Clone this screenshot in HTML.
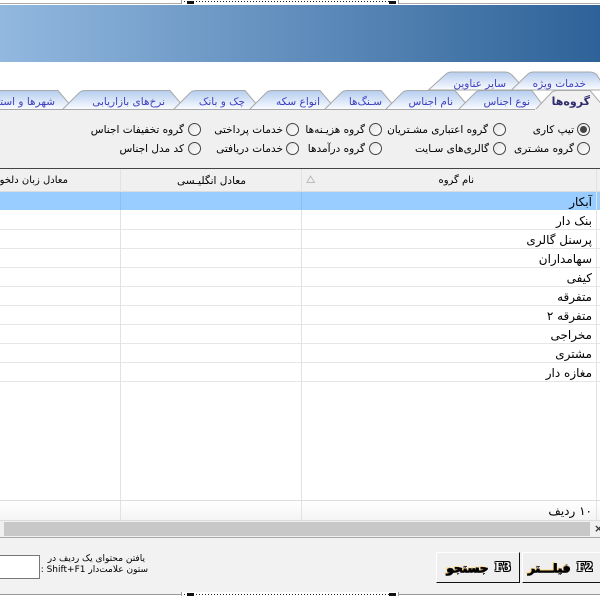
<!DOCTYPE html>
<html><head><meta charset="utf-8">
<style>
html,body{margin:0;padding:0;background:#fff}
#p{position:relative;width:600px;height:596px;overflow:hidden;background:#fff;font-family:"DejaVu Sans","Liberation Sans",sans-serif;font-size:10.5px;color:#000}
#p div{position:absolute}
.t{white-space:nowrap;direction:rtl;line-height:14px;text-align:right}
.tab{color:#3f3fc0}
.line{background:#e6e6e6;left:0;width:600px;height:1px}
.row{font-size:12px;right:8px}
.r{width:11px;height:11px;border:1px solid #444;border-radius:50%;background:linear-gradient(135deg,#e4e4e4,#fff)}
.btn{background:#efefef;border-top:1px solid #fff;border-left:1px solid #fff;border-right:1px solid #111;border-bottom:1px solid #111;box-sizing:border-box}
.bt{font-weight:bold;white-space:nowrap;line-height:14px}
.bf{font-family:"Liberation Serif",serif;font-size:14px;color:#fff;text-shadow:1px 0 0 #000,-1px 0 0 #000,0 1px 0 #000,0 -1px 0 #000,1px 1px 0 #000,-1px -1px 0 #000,1px -1px 0 #000,-1px 1px 0 #000}
.ba{font-size:12px;direction:rtl;color:#000;text-shadow:1px 0 0 #000,0 1px 0 #333,-1px -1px 0 #ffd27a}
</style></head>
<body><div id="p">
<div style="left:0;top:3px;width:181px;height:1px;background:#aaa"></div>
<div style="left:399px;top:3px;width:201px;height:1px;background:#aaa"></div>
<div style="left:181px;top:0;width:218px;height:4px;background:#fff;border-left:1px solid #999;border-right:1px solid #999;box-sizing:border-box"></div>
<div style="left:184px;top:1px;width:212px;height:1px;background:repeating-linear-gradient(90deg,#222 0 1px,#fff 1px 3px)"></div>
<div style="left:187px;top:1px;width:7px;height:3px;background:#111"></div>
<div style="left:389px;top:1px;width:7px;height:3px;background:#111"></div>
<div style="left:0;top:5px;width:600px;height:57px;background:linear-gradient(90deg,#92b8df,#2e6298)"></div>

<svg style="position:absolute;left:0;top:70px" width="600" height="41" viewBox="0 70 600 41">
<defs><linearGradient id="g" x1="0" y1="0" x2="0" y2="1"><stop offset="0" stop-color="#b4cdee"/><stop offset="1" stop-color="#fbfcff"/></linearGradient></defs>
<g fill="url(#g)" stroke="#a8a8a8" stroke-width="1">
<path d="M428.500 90L446 74Q448 72 452 72L505 72Q509 72 512 75L521 85L521 90Z"/>
<path d="M511.500 90L528 74Q530 72 534 72L590 72Q594 72 597 75L606 90Z"/>
<path d="M-40 109.500L-20 90.500L58 90.500L74 109.500Z"/>
<path d="M62.500 109.500L80 92Q82 90.500 86 90.500L170 90.500L186 109.500Z"/>
<path d="M173.500 109.500L191 92Q193 90.500 197 90.500L245 90.500L261 109.500Z"/>
<path d="M249.500 109.500L267 92Q269 90.500 273 90.500L320 90.500L336 109.500Z"/>
<path d="M324.500 109.500L342 92Q344 90.500 348 90.500L381 90.500L397 109.500Z"/>
<path d="M385.500 109.500L403 92Q405 90.500 409 90.500L455 90.500L471 109.500Z"/>
<path d="M458.500 109.500L476 92Q478 90.500 482 90.500L532 90.500L546 109.500Z"/>
</g>
<path d="M535.500 109.500L552 92Q554 90.500 558 90.500L590 90.500L606 109.500Z" fill="#f0f0f0" stroke="#a8a8a8"/>
</svg>
<div style="left:0;top:109px;width:600px;height:59px;background:#f0f0f0"></div>
<div style="left:0;top:109px;width:535px;height:1px;background:#a8a8a8"></div>

<div class="t tab" style="right:14px;top:77px">خدمات ویژه</div>
<div class="t tab" style="right:94px;top:77px">سایر عناوین</div>
<div class="t" style="right:10px;top:95px;font-weight:bold;color:#2d2d6b;font-size:11px">گروه‌ها</div>
<div class="t tab" style="right:70px;top:95px">نوع اجناس</div>
<div class="t tab" style="right:147px;top:95px">نام اجناس</div>
<div class="t tab" style="right:218px;top:95px">سـنگ‌ها</div>
<div class="t tab" style="right:280px;top:95px">انواع سکه</div>
<div class="t tab" style="right:355px;top:95px">چک و بانک</div>
<div class="t tab" style="right:435px;top:95px">نرخ‌های بازاریابی</div>
<div class="t tab" style="right:545px;top:95px">شهرها و استان‌ها</div>

<div class="r" style="left:577px;top:123px"></div><div style="left:580px;top:126px;width:7px;height:7px;border-radius:50%;background:#444"></div>
<div class="r" style="left:493px;top:123px"></div>
<div class="r" style="left:369px;top:123px"></div>
<div class="r" style="left:286px;top:123px"></div>
<div class="r" style="left:188px;top:123px"></div>
<div class="r" style="left:577px;top:142px"></div>
<div class="r" style="left:493px;top:142px"></div>
<div class="r" style="left:369px;top:142px"></div>
<div class="r" style="left:286px;top:142px"></div>
<div class="r" style="left:188px;top:142px"></div>

<div class="t" style="right:26px;top:123px">تیپ کاری</div>
<div class="t" style="right:112px;top:123px">گروه اعتباری مشـتریان</div>
<div class="t" style="right:235px;top:123px">گروه هزیـنه‌ها</div>
<div class="t" style="right:317px;top:123px">خدمات پرداختی</div>
<div class="t" style="right:416px;top:123px">گروه تخفیفات اجناس</div>
<div class="t" style="right:26px;top:142px">گروه مشـتری</div>
<div class="t" style="right:111px;top:142px">گالری‌های سـایت</div>
<div class="t" style="right:235px;top:142px">گروه درآمدها</div>
<div class="t" style="right:317px;top:142px">خدمات دریافتی</div>
<div class="t" style="right:416px;top:142px">کد مدل اجناس</div>

<div style="left:0;top:168px;width:600px;height:1px;background:#444"></div>
<div style="left:0;top:169px;width:600px;height:23px;background:#f0f0f0;border-bottom:1px solid #ddd;box-sizing:border-box"></div>
<div class="t" style="right:126px;top:174px;font-size:10px">نام گروه</div>
<div class="t" style="right:354px;top:174px;font-size:10.5px">معادل انگلیـسی</div>
<div class="t" style="left:0;width:68px;overflow:hidden;top:174px;font-size:10px">معادل زبان دلخواه</div>
<svg style="position:absolute;left:306px;top:175px" width="10" height="9"><path d="M4.500 1L1 7.500L8.500 7.500Z" fill="none" stroke="#bbb"/></svg>

<div style="left:0;top:192px;width:600px;height:18px;background:#99ccff"></div>
<div class="line" style="top:229px"></div>
<div class="line" style="top:248px"></div>
<div class="line" style="top:267px"></div>
<div class="line" style="top:286px"></div>
<div class="line" style="top:305px"></div>
<div class="line" style="top:324px"></div>
<div class="line" style="top:343px"></div>
<div class="line" style="top:362px"></div>
<div class="line" style="top:381px"></div>
<div style="left:120px;top:169px;width:1px;height:351px;background:#e2e2e2"></div>
<div style="left:301px;top:169px;width:1px;height:351px;background:#e2e2e2"></div>
<div style="left:596px;top:169px;width:1px;height:351px;background:#e2e2e2"></div>
<div style="left:120px;top:192px;width:1px;height:18px;background:#8fbfee"></div>
<div style="left:301px;top:192px;width:1px;height:18px;background:#8fbfee"></div>

<div class="t row" style="top:195px">آبکار</div>
<div class="t row" style="top:214px">بنک دار</div>
<div class="t row" style="top:233px">پرسنل گالری</div>
<div class="t row" style="top:252px">سهامداران</div>
<div class="t row" style="top:271px">کیفی</div>
<div class="t row" style="top:290px">متفرقه</div>
<div class="t row" style="top:309px">متفرقه ۲</div>
<div class="t row" style="top:328px">مخراجی</div>
<div class="t row" style="top:347px">مشتری</div>
<div class="t row" style="top:366px">مغازه دار</div>

<div style="left:0;top:500px;width:600px;height:1px;background:#ddd"></div>
<div style="left:0;top:501px;width:600px;height:19px;background:linear-gradient(#fff,#f4f4f4)"></div>
<div style="left:120px;top:501px;width:1px;height:19px;background:#e2e2e2"></div>
<div style="left:301px;top:501px;width:1px;height:19px;background:#e2e2e2"></div>
<div style="left:596px;top:501px;width:1px;height:19px;background:#e2e2e2"></div>
<div class="t row" style="top:504px">۱۰ ردیف</div>

<div style="left:0;top:520px;width:600px;height:17px;background:#f0f0f0;border-top:1px solid #ddd;box-sizing:border-box"></div>
<div style="left:4px;top:522px;width:586px;height:14px;background:#c8c8c8"></div>
<div style="left:594px;top:522px;font-size:11px;line-height:14px;color:#333;font-weight:bold">×</div>
<div style="left:0;top:537px;width:600px;height:1px;background:#aaa"></div>
<div style="left:0;top:538px;width:600px;height:56px;background:#f2f2f2"></div>
<div style="left:0;top:594px;width:600px;height:1px;background:#999"></div>

<div class="btn" style="left:436px;top:552px;width:84px;height:31px"></div>
<div class="btn" style="left:522px;top:552px;width:79px;height:31px"></div>
<div class="bt bf" style="left:577px;top:561px">F2</div>
<div class="bt ba" style="right:30px;top:561px">فیلـــتر</div>
<div class="bt bf" style="left:495px;top:561px">F3</div>
<div class="bt ba" style="right:112px;top:561px">جستجو</div>

<div style="left:-2px;top:555px;width:42px;height:24px;background:#fff;border:1px solid #777;box-sizing:border-box"></div>
<div class="t" style="right:455px;top:553px;font-size:9px;line-height:12px">یافتن محتوای یک ردیف در</div>
<div class="t" style="right:452px;top:564px;font-size:9px;line-height:12px">ستون علامت‌دار Shift+F1 :</div>

<div style="left:181px;top:592px;width:218px;height:4px;background:#fff;border-left:1px solid #999;border-right:1px solid #999;box-sizing:border-box"></div>
<div style="left:184px;top:594px;width:212px;height:1px;background:repeating-linear-gradient(90deg,#222 0 1px,#fff 1px 3px)"></div>
<div style="left:187px;top:593px;width:7px;height:3px;background:#111"></div>
<div style="left:389px;top:593px;width:7px;height:3px;background:#111"></div>
</div></body></html>
